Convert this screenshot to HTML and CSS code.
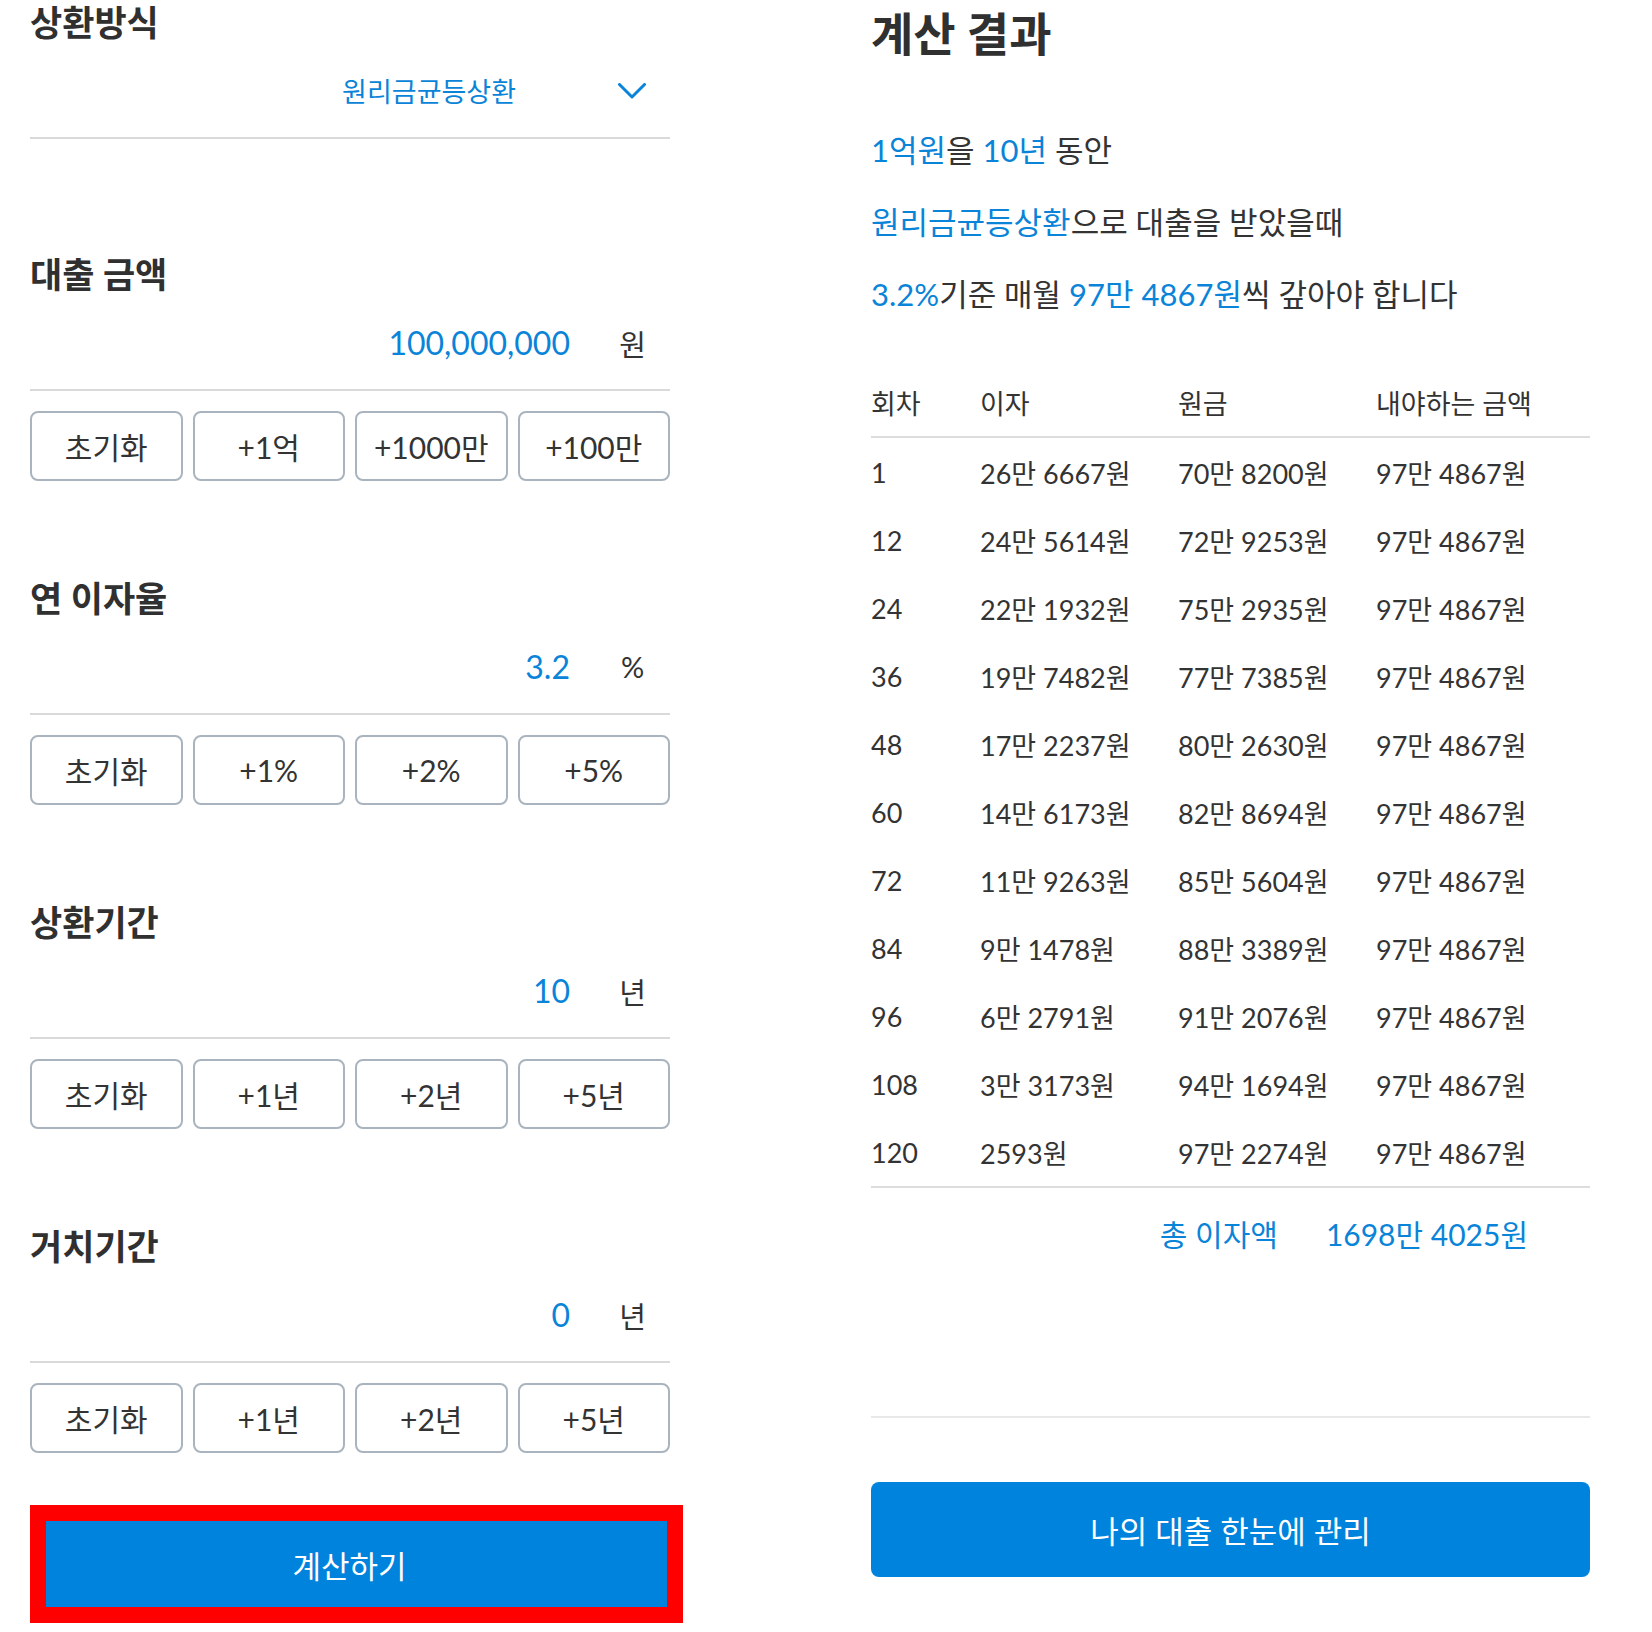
FILE: index.html
```html
<!DOCTYPE html>
<html lang="ko">
<head>
<meta charset="utf-8">
<title>대출 계산기</title>
<link rel="stylesheet" href="styles.css">
</head>
<body>
<div class="page">
  <div class="form">
    <section class="field field-select">
      <h2 class="field-title">상환방식</h2>
      <div class="field-input">
        <span class="select-value">원리금균등상환</span>
        <svg class="chevron" width="28" height="16" viewBox="0 0 28 16"><polyline points="1.5,1.5 14,14 26.5,1.5" fill="none" stroke="#0a84d8" stroke-width="3" stroke-linecap="round" stroke-linejoin="round"/></svg>
      </div>
    </section>

    <section class="field">
      <h2 class="field-title">대출 금액</h2>
      <div class="field-input">
        <span class="value">100,000,000</span><span class="unit">원</span>
      </div>
      <div class="quick">
        <button class="quick-btn">초기화</button>
        <button class="quick-btn">+1억</button>
        <button class="quick-btn">+1000만</button>
        <button class="quick-btn">+100만</button>
      </div>
    </section>

    <section class="field">
      <h2 class="field-title">연 이자율</h2>
      <div class="field-input">
        <span class="value">3.2</span><span class="unit">%</span>
      </div>
      <div class="quick">
        <button class="quick-btn">초기화</button>
        <button class="quick-btn">+1%</button>
        <button class="quick-btn">+2%</button>
        <button class="quick-btn">+5%</button>
      </div>
    </section>

    <section class="field">
      <h2 class="field-title">상환기간</h2>
      <div class="field-input">
        <span class="value">10</span><span class="unit">년</span>
      </div>
      <div class="quick">
        <button class="quick-btn">초기화</button>
        <button class="quick-btn">+1년</button>
        <button class="quick-btn">+2년</button>
        <button class="quick-btn">+5년</button>
      </div>
    </section>

    <section class="field field-last">
      <h2 class="field-title">거치기간</h2>
      <div class="field-input">
        <span class="value">0</span><span class="unit">년</span>
      </div>
      <div class="quick">
        <button class="quick-btn">초기화</button>
        <button class="quick-btn">+1년</button>
        <button class="quick-btn">+2년</button>
        <button class="quick-btn">+5년</button>
      </div>
    </section>

    <div class="submit-highlight">
      <button class="submit">계산하기</button>
    </div>
  </div>

  <div class="result">
    <h1 class="result-title">계산 결과</h1>
    <div class="summary">
      <p><span class="hl">1억원</span>을 <span class="hl">10년</span> 동안</p>
      <p><span class="hl">원리금균등상환</span>으로 대출을 받았을때</p>
      <p><span class="hl">3.2%</span>기준 매월 <span class="hl">97만 4867원</span>씩 갚아야 합니다</p>
    </div>

    <div class="schedule">
      <div class="schedule-row schedule-head">
        <span>회차</span><span>이자</span><span>원금</span><span>내야하는 금액</span>
      </div>
      <div class="schedule-body">
        <div class="schedule-row"><span>1</span><span>26만 6667원</span><span>70만 8200원</span><span>97만 4867원</span></div>
        <div class="schedule-row"><span>12</span><span>24만 5614원</span><span>72만 9253원</span><span>97만 4867원</span></div>
        <div class="schedule-row"><span>24</span><span>22만 1932원</span><span>75만 2935원</span><span>97만 4867원</span></div>
        <div class="schedule-row"><span>36</span><span>19만 7482원</span><span>77만 7385원</span><span>97만 4867원</span></div>
        <div class="schedule-row"><span>48</span><span>17만 2237원</span><span>80만 2630원</span><span>97만 4867원</span></div>
        <div class="schedule-row"><span>60</span><span>14만 6173원</span><span>82만 8694원</span><span>97만 4867원</span></div>
        <div class="schedule-row"><span>72</span><span>11만 9263원</span><span>85만 5604원</span><span>97만 4867원</span></div>
        <div class="schedule-row"><span>84</span><span>9만 1478원</span><span>88만 3389원</span><span>97만 4867원</span></div>
        <div class="schedule-row"><span>96</span><span>6만 2791원</span><span>91만 2076원</span><span>97만 4867원</span></div>
        <div class="schedule-row"><span>108</span><span>3만 3173원</span><span>94만 1694원</span><span>97만 4867원</span></div>
        <div class="schedule-row"><span>120</span><span>2593원</span><span>97만 2274원</span><span>97만 4867원</span></div>
      </div>
    </div>

    <div class="total">
      <span>총 이자액</span><span>1698만 4025원</span>
    </div>

    <div class="divider"></div>

    <button class="manage-btn">나의 대출 한눈에 관리</button>
  </div>
</div>
</body>
</html>
```

FILE: styles.css
```css
* {
  box-sizing: border-box;
}

body {
  margin: 0;
  background: #ffffff;
  color: #333333;
  font-family: Lato, "Noto Sans CJK KR", sans-serif;
}

.page {
  display: flex;
  align-items: flex-start;
}

/* ---------- left form ---------- */
.form {
  width: 640px;
  margin-left: 30px;
  display: flex;
  flex-direction: column;
}

.field {
  margin-bottom: 95px;
}

.field-select {
  margin-bottom: 113px;
}

.field-last {
  margin-bottom: 52px;
}

.field-title {
  margin: 0;
  font-size: 35px;
  line-height: 44px;
  font-weight: 700;
  color: #303030;
}

.field-input {
  height: 95px;
  display: flex;
  align-items: center;
  justify-content: flex-end;
  border-bottom: 2px solid #dadada;
  padding-right: 24px;
}

.select-value {
  font-size: 27px;
  color: #0a84d8;
}

.chevron {
  margin-left: 102px;
  display: block;
}

.value {
  font-size: 32px;
  color: #0a84d8;
}

.unit {
  width: 27px;
  margin-left: 49px;
  text-align: center;
  font-size: 29px;
  color: #333333;
}

.quick {
  display: grid;
  grid-template-columns: repeat(4, 1fr);
  gap: 10px;
  margin-top: 20px;
}

.quick-btn {
  height: 70px;
  border: 2px solid #a9b4bf;
  border-radius: 8px;
  background: #ffffff;
  color: #333333;
  font-family: inherit;
  font-size: 30px;
  padding: 0;
}

.submit-highlight {
  width: 653px;
  height: 118px;
  border: 16px solid #ff0000;
}

.submit {
  width: 100%;
  height: 100%;
  border: none;
  background: #0083dd;
  color: #ffffff;
  font-family: inherit;
  font-size: 31px;
  padding: 0 14px 0 0;
}

/* ---------- right result ---------- */
.result {
  width: 719px;
  margin-left: 201px;
}

.result-title {
  margin: 0;
  font-size: 46px;
  line-height: 68px;
  font-weight: 700;
  color: #303030;
}

.summary {
  margin-top: 46px;
  font-size: 31px;
  line-height: 72px;
}

.summary p {
  margin: 0;
}

.hl {
  color: #0a84d8;
}

.schedule {
  margin-top: 38px;
}

.schedule-row {
  display: grid;
  grid-template-columns: 109px 198px 198px 1fr;
  height: 68px;
  align-items: center;
  font-size: 27px;
  color: #333333;
  white-space: nowrap;
}

.schedule-head {
  border-bottom: 2px solid #dddddd;
  height: 70px;
}

.schedule-body {
  border-bottom: 2px solid #dddddd;
}

.total {
  height: 90px;
  display: flex;
  align-items: center;
  justify-content: flex-end;
  gap: 48px;
  padding-right: 62px;
  font-size: 30px;
  color: #0a84d8;
}

.divider {
  margin-top: 138px;
  border-top: 2px solid #e8e8e8;
}

.manage-btn {
  display: block;
  width: 100%;
  height: 95px;
  margin-top: 64px;
  border: none;
  border-radius: 8px;
  background: #0083dd;
  color: #ffffff;
  font-family: inherit;
  font-size: 31px;
}
```
